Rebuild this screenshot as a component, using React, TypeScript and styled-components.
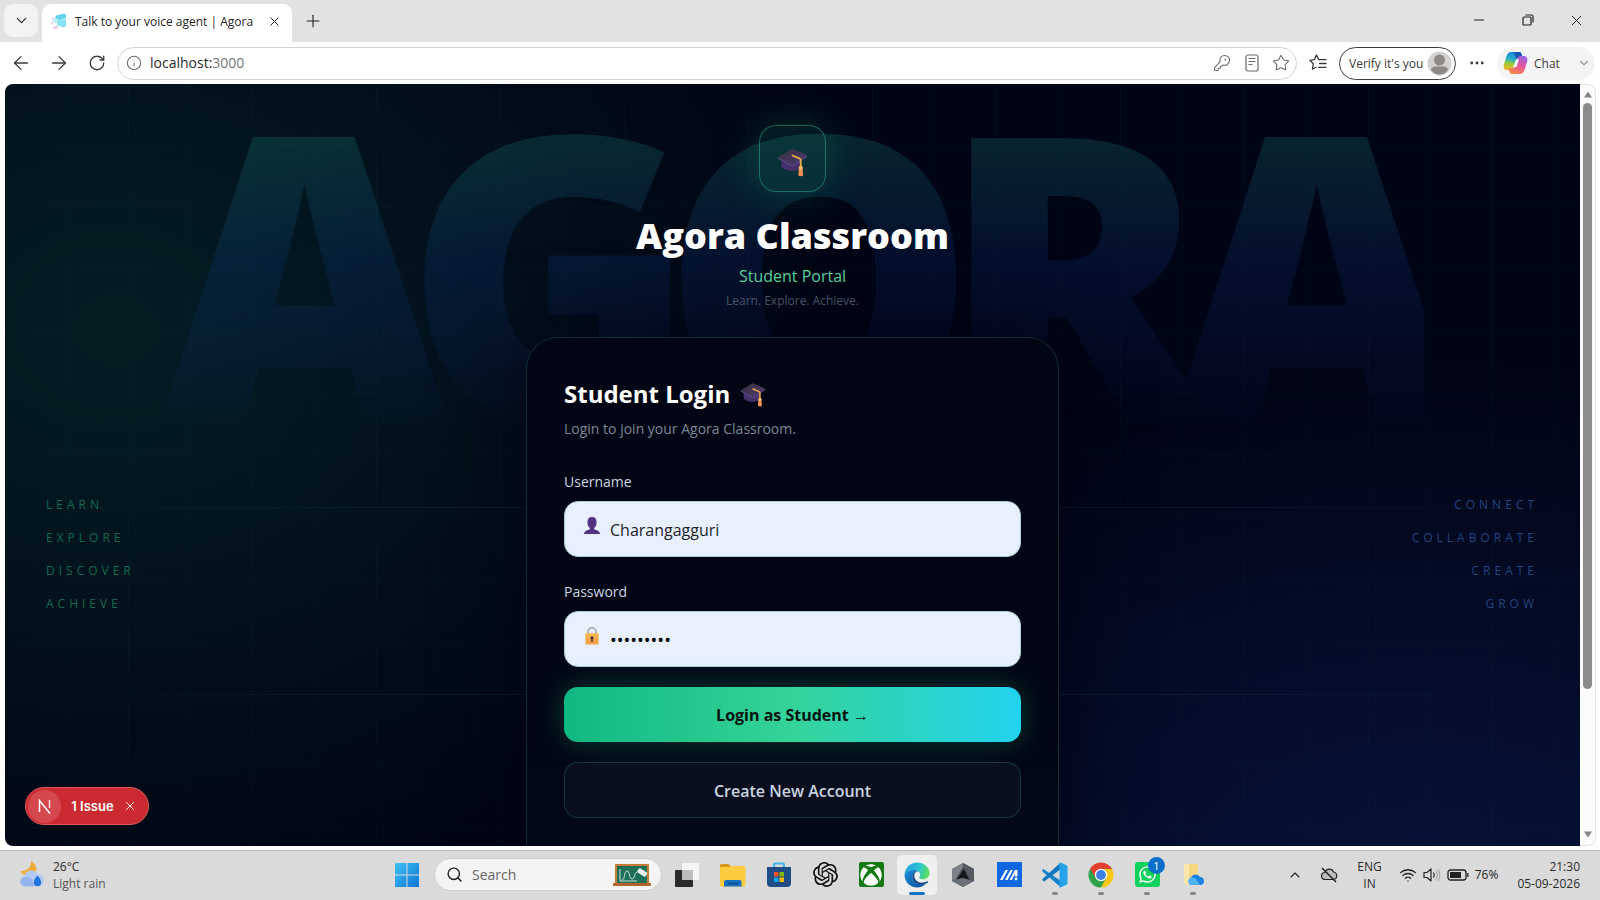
import React from "react";
import styled, { createGlobalStyle, css } from "styled-components";
import { SiOpenai } from "react-icons/si";
import { FaXbox, FaWhatsapp } from "react-icons/fa";
import {
  ArrowLeft, ArrowRight, ChevronDown, ChevronUp, Ellipsis, Info, KeyRound,
  Minus, Plus, RotateCw, Search, Star, Wifi, X,
} from "lucide-react";

const sans = `"Open Sans", "Noto Sans", sans-serif`;

const GlobalStyle = createGlobalStyle`
  *, *::before, *::after { box-sizing: border-box; }
  body { margin: 0; font-family: ${sans}; color: #1f1f1f; background: #fff; }
  button, input { font: inherit; color: inherit; }
  button { border: 0; padding: 0; background: none; cursor: pointer; }
  h1, h2, p, ul { margin: 0; padding: 0; }
  svg { display: block; flex: none; }
`;

const Desktop = styled.div`
  display: flex;
  flex-direction: column;
  height: 100vh;
  overflow: hidden;
`;

/* ---------- Browser chrome ---------- */

const TitleBar = styled.header`
  display: flex;
  align-items: flex-end;
  height: 42px;
  padding-left: 4px;
  background: #e2e2e2;
`;

const TabMenuButton = styled.button`
  display: grid;
  place-items: center;
  width: 34px;
  height: 33px;
  margin: 0 4px 5px 0;
  border-radius: 9px;
  background: #f3f3f3;
`;

const Tab = styled.div`
  display: flex;
  align-items: center;
  width: 250px;
  height: 38px;
  padding: 0 10px 3px 8px;
  border-radius: 9px 9px 0 0;
  background: #fff;
`;

const TabTitle = styled.span`
  flex: 1;
  margin-left: 7px;
  font-size: 12px;
  line-height: 16px;
  white-space: nowrap;
`;

const IconButton = styled.button<{ $w?: number }>`
  display: grid;
  place-items: center;
  flex: none;
  width: ${(p) => p.$w ?? 16}px;
  height: 24px;
`;

const NewTab = styled(IconButton)`
  height: 38px;
  margin-left: 6px;
  padding-bottom: 4px;
`;

const WindowControls = styled.div`
  display: flex;
  margin-left: auto;
  height: 42px;
  padding-bottom: 2px;
  align-items: center;
`;

const Toolbar = styled.nav`
  display: flex;
  align-items: center;
  flex: none;
  height: 42px;
  padding: 0 5px 0 2px;
  background: #fff;
  color: #3a3a3a;
`;

const AddressBar = styled.div`
  display: flex;
  align-items: center;
  flex: 1;
  height: 33px;
  margin-left: 2px;
  padding: 0 1px 0 8px;
  border: 1px solid #d2d2d2;
  border-radius: 17px;
  color: #6b6b6b;
`;

const Url = styled.span`
  flex: 1;
  margin-left: 8px;
  font-size: 14px;
  line-height: 20px;
  color: #777;
  b { font-weight: 400; color: #2a2a2a; }
`;

const VerifyButton = styled.button`
  display: flex;
  align-items: center;
  justify-content: space-between;
  width: 117px;
  height: 33px;
  padding: 0 3px 0 9px;
  border: 1px solid #3c3c3c;
  border-radius: 17px;
  font-size: 12px;
  white-space: nowrap;
`;

const ChatButton = styled.button`
  display: flex;
  align-items: center;
  gap: 6px;
  width: 98px;
  height: 33px;
  padding: 0 4px 0 6px;
  border-radius: 17px;
  background: #f4f4f4;
  font-size: 12px;
  span { flex: 1; text-align: left; }
`;

/* ---------- Web page ---------- */

const Window = styled.div`
  display: flex;
  flex: 1;
  min-height: 0;
  padding: 0 4px 4px 5px;
  background: #fff;
`;

const Page = styled.main`
  position: relative;
  display: flex;
  flex-direction: column;
  align-items: center;
  flex: 1;
  overflow: hidden;
  padding-top: 41px;
  border-radius: 8px 0 0 8px;
  background:
    radial-gradient(ellipse 46% 78% at 7% 32%, rgba(16, 185, 129, 0.14), transparent),
    radial-gradient(ellipse 50% 72% at 90% 108%, rgba(29, 78, 216, 0.2), transparent),
    #010414;
`;

const Grid = styled.div`
  position: absolute;
  inset: 0;
  background-image:
    linear-gradient(to right, transparent 61px, rgba(52, 211, 153, 0.025) 61px),
    linear-gradient(to bottom, transparent 61px, rgba(52, 211, 153, 0.025) 61px);
  background-size: 62px 62px;
`;

const Beam = styled.div<{ $top: string }>`
  position: absolute;
  left: 0;
  right: 0;
  top: ${(p) => p.$top};
  height: 1px;
  background: linear-gradient(90deg, transparent, rgba(52, 211, 153, 0.18), transparent);
`;

const Watermark = styled.div`
  position: absolute;
  top: 9px;
  left: 50%;
  transform: translateX(-50%);
  font-family: "Noto Sans", ${sans};
  font-weight: 900;
  font-size: 396px;
  line-height: 350px;
  letter-spacing: -36px;
  white-space: nowrap;
  color: transparent;
  background: linear-gradient(180deg,
    rgba(45, 180, 160, 0.19) 10%,
    rgba(25, 80, 190, 0.15) 48%,
    rgba(40, 60, 170, 0.1) 75%,
    rgba(40, 60, 170, 0.02) 96%);
  background-clip: text;
  -webkit-background-clip: text;
  user-select: none;
`;

const WordList = styled.ul<{ $side: "left" | "right" }>`
  position: absolute;
  top: 404px;
  ${(p) => (p.$side === "left"
    ? css`left: 41px; color: #14694f;`
    : css`right: 42px; text-align: right; color: #24457f;`)}
  display: flex;
  flex-direction: column;
  list-style: none;
  font-size: 12px;
  line-height: 33px;
  letter-spacing: 4px;
`;

const Logo = styled.div`
  position: relative;
  display: grid;
  place-items: center;
  flex: none;
  width: 67px;
  height: 67px;
  padding-top: 6px;
  border: 1px solid rgba(52, 211, 153, 0.4);
  border-radius: 17px;
  background: rgba(16, 185, 129, 0.12);
  box-shadow: 0 0 42px rgba(16, 185, 129, 0.26);
`;

const Title = styled.h1`
  position: relative;
  margin-top: 20px;
  font-weight: 800;
  font-size: 36px;
  line-height: 48px;
  color: #fff;
`;

const Portal = styled.p`
  position: relative;
  margin-top: 3px;
  font-size: 16px;
  line-height: 26px;
  color: #5ddba4;
`;

const Motto = styled.p`
  position: relative;
  margin-top: 3px;
  font-size: 12px;
  line-height: 18px;
  color: #526078;
`;

const Card = styled.form`
  position: relative;
  display: flex;
  flex-direction: column;
  flex: none;
  width: 533px;
  max-width: 100%;
  margin-top: 27px;
  padding: 40px 37px 60px;
  border: 1px solid rgba(52, 211, 153, 0.2);
  border-radius: 32px;
  background: linear-gradient(180deg, #020614 70%, #040918);
  box-shadow: 0 0 84px rgba(1, 2, 16, 0.7);
`;

const CardTitle = styled.h2`
  display: flex;
  align-items: center;
  gap: 10px;
  font-weight: 700;
  font-size: 24px;
  line-height: 32px;
  color: #fff;
`;

const CardText = styled.p`
  margin: 7px 0 30px;
  font-size: 14px;
  line-height: 24px;
  color: #7b8799;
`;

const FieldLabel = styled.label`
  font-size: 14px;
  line-height: 22px;
  color: #cbd5e1;
`;

const Field = styled.div`
  display: flex;
  align-items: center;
  height: 56px;
  margin: 8px 0 24px;
  padding-left: 18px;
  border: 1px solid #a8cdd6;
  border-radius: 14px;
  background: #e8f0fe;
  &:last-of-type { margin-bottom: 20px; }
  svg { margin-bottom: 6px; }
`;

const Input = styled.input`
  flex: 1;
  min-width: 0;
  height: 100%;
  margin-left: 8px;
  padding: 2px 0 0 1px;
  border: 0;
  outline: 0;
  background: none;
  font-size: 16px;
  color: #1c1f26;
  &[type="password"] { font-size: 18px; color: #000; }
`;

const ActionButton = styled.button<{ $primary?: boolean }>`
  height: ${(p) => (p.$primary ? 55 : 56)}px;
  margin-bottom: 20px;
  padding-top: 1px;
  border-radius: 14px;
  font-size: 16px;
  line-height: 24px;
  ${(p) => (p.$primary
    ? css`
        font-weight: 700;
        color: #04130f;
        background: linear-gradient(90deg, #10b981, #34d399 50%, #22d3ee);
        box-shadow: 0 0 30px rgba(16, 185, 129, 0.3);
      `
    : css`
        font-weight: 600;
        color: #cbd5e1;
        background: #0a0f20;
        border: 1px solid rgba(52, 211, 153, 0.2);
      `)}
`;

const IssuePill = styled.div`
  position: absolute;
  left: 20px;
  bottom: 21px;
  display: flex;
  align-items: center;
  width: 124px;
  height: 38px;
  padding: 0 10px 0 2px;
  border: 1px solid #d95a5f;
  border-radius: 19px;
  background: #ca2a30;
  color: #fff;
`;

const IssueBadge = styled.span`
  display: grid;
  place-items: center;
  width: 33px;
  height: 33px;
  border-radius: 50%;
  background: #d5494e;
`;

const IssueText = styled.button`
  flex: 1;
  padding-left: 2px;
  font: 600 13px/18px Inter, sans-serif;
`;

const Scrollbar = styled.div`
  display: flex;
  flex-direction: column;
  align-items: center;
  width: 16px;
  padding: 6px 0 7px;
  border: 1px solid #e6e6e6;
  border-left: 0;
  border-radius: 0 8px 8px 0;
  background: #fcfcfc;
`;

const Track = styled.div`
  flex: 1;
  width: 9px;
  margin: 5px 0;
`;

const Thumb = styled.div`
  height: 81%;
  border-radius: 5px;
  background: #8b8b8b;
`;

/* ---------- Taskbar ---------- */

const Taskbar = styled.footer`
  display: grid;
  grid-template-columns: minmax(0, 1fr) auto minmax(0, 1fr);
  align-items: center;
  flex: none;
  height: 50px;
  padding-bottom: 2px;
  border-top: 1px solid #b9b9b9;
  background: #dadada;
`;

const Weather = styled.div`
  display: flex;
  align-items: center;
  gap: 7px;
  padding-left: 20px;
`;

const SmallText = styled.div<{ $align?: string }>`
  font-size: 12px;
  line-height: 17px;
  text-align: ${(p) => p.$align ?? "left"};
  white-space: nowrap;
  color: #2b2b2b;
  div + div { color: ${(p) => (p.$align ? "#2b2b2b" : "#555")}; }
`;

const Apps = styled.div`
  display: flex;
  align-items: center;
`;

const SearchBox = styled.label`
  display: flex;
  align-items: center;
  width: 228px;
  height: 33px;
  margin: 0 2px 0 4px;
  padding: 0 10px 0 11px;
  border: 1px solid #cfcfcf;
  border-radius: 17px;
  background: #f4f4f4;
  input {
    flex: 1;
    min-width: 0;
    margin-left: 9px;
    padding: 0;
    border: 0;
    outline: 0;
    background: none;
    font-size: 14px;
  }
  input::placeholder { color: #666; opacity: 1; }
`;

const AppButton = styled.button<{ $state?: "active" | "running" }>`
  position: relative;
  display: grid;
  place-items: center;
  width: 40px;
  height: 40px;
  margin: 0 3px;
  border-radius: 5px;
  background: ${(p) => (p.$state === "active" ? "#efefef" : "none")};
  ${(p) => p.$state && css`
    &::after {
      content: "";
      position: absolute;
      left: 50%;
      bottom: 0;
      transform: translateX(-50%);
      width: ${p.$state === "active" ? 16 : 6}px;
      height: 3px;
      border-radius: 2px;
      background: ${p.$state === "active" ? "#1673c4" : "#858585"};
    }
  `}
`;

const CountBadge = styled.span`
  position: absolute;
  top: 2px;
  right: 2px;
  width: 17px;
  height: 17px;
  border-radius: 50%;
  background: #0a6fcb;
  color: #fff;
  font-size: 11px;
  line-height: 17px;
`;

const Tray = styled.div`
  display: flex;
  align-items: center;
  justify-content: flex-end;
  padding-right: 20px;
  color: #222;
`;

const TrayIcons = styled.div`
  display: flex;
  margin-right: 10px;
`;

const TrayGroup = styled.div`
  display: flex;
  align-items: center;
  gap: 6px;
  margin: 0 19px 0 17px;
  font-size: 12px;
`;

/* ---------- Drawings ---------- */

const GradCap = ({ size }: { size: number }) => (
  <svg width={size} height={size} viewBox="0 0 32 32">
    <defs>
      <linearGradient id="capTop" x1="0" y1="0" x2="1" y2="1">
        <stop offset="0" stopColor="#37323f" />
        <stop offset="1" stopColor="#4d3a6e" />
      </linearGradient>
    </defs>
    <path d="M4.500 13v8.500c3 4 14 6 19.500 2V14z" fill="#46306c" />
    <path d="M1 11.500 15 3q1-.6 2 0l14 6.500-14 10q-1 .6-2 0z" fill="url(#capTop)" />
    <path d="M1 11.500v1.300l14 8q1 .6 2 0l14-9.800V9.500l-14 10q-1 .6-2 0z" fill="#5f4a86" />
    <path d="m16 9.800 7.500 3.300q1 .5 1 1.700v7" fill="none" stroke="#f2a84a" strokeWidth="1.900" strokeLinecap="round" />
    <path d="M22.700 22h3.600l.7 8.500q-2.400 1.600-5 0z" fill="#f29155" />
    <circle cx="24.500" cy="22.500" r="2" fill="#ffc069" />
  </svg>
);

const UserGlyph = () => (
  <svg width="18" height="18" viewBox="0 0 18 18">
    <path d="M4.500 5Q4.500 0 9 0t4.500 5v1.500q0 3-2.300 4.600v1.400q5 .8 6 4.500H.8q1-3.700 6-4.500v-1.400Q4.500 9.500 4.500 6.500z" fill="#533283" />
  </svg>
);

const LockGlyph = () => (
  <svg width="18" height="18" viewBox="0 0 18 18">
    <path d="M5 8V4.800a4 4 0 0 1 8 0V8" fill="none" stroke="#b6b2bb" strokeWidth="1.900" />
    <rect x="2.500" y="6.500" width="13" height="11" rx="1.200" fill="#f8a34c" />
    <rect x="2.500" y="6.500" width="13" height="4" rx="1.200" fill="#fbb84f" />
    <path d="M9 9.200a1.600 1.600 0 0 1 .7 3V15H8.300v-2.800a1.600 1.600 0 0 1 .7-3z" fill="#45313c" />
  </svg>
);

const Favicon = () => (
  <svg width="18" height="18" viewBox="0 0 18 18">
    <path d="M6 2.500 14 .5q2 0 2 2V5l-6 2-5-1z" fill="#63d5ec" />
    <path d="M7 7.500 16 6l.5 6q-.5 2-3 2.500L7 12z" fill="#8ae3f2" />
    <path d="m3 6 5 1-2 3-4-1z" fill="#b9eef6" />
    <path d="m2 4 2 1-1 2zM0 10l3-1v3z" fill="#f3c4ee" />
    <path d="m3 14 4-2 2 2-5 3z" fill="#e9cdf3" />
  </svg>
);

const Avatar = () => (
  <svg width="25" height="25" viewBox="0 0 25 25">
    <circle cx="12.500" cy="12.500" r="12" fill="#d3d1cf" />
    <circle cx="12.500" cy="9" r="5.500" fill="#8b8886" />
    <path d="M4 19q1-3.500 4-3.500h9q3 0 4 3.500-3.500 4.500-8.500 4.500T4 19z" fill="#8b8886" />
  </svg>
);

const Copilot = () => (
  <svg width="25" height="24" viewBox="0 0 25 24">
    <defs>
      <linearGradient id="cpL" x1=".5" y1="0" x2=".3" y2="1">
        <stop offset="0" stopColor="#1784d8" />
        <stop offset=".4" stopColor="#27b1c8" />
        <stop offset=".65" stopColor="#9ccb3b" />
        <stop offset="1" stopColor="#f4b321" />
      </linearGradient>
      <linearGradient id="cpR" x1=".7" y1="0" x2=".3" y2="1">
        <stop offset="0" stopColor="#9a62e0" />
        <stop offset=".5" stopColor="#e65597" />
        <stop offset="1" stopColor="#fb8a45" />
      </linearGradient>
    </defs>
    <path d="M8 1h8q2 0 2.600 2l1 3.500h-4q-2 0-2.600 2l-2.600 8.500q-.7 2-3 2H4q-4.500-.5-3-6L3.500 5Q5 1 8 1z" fill="url(#cpL)" />
    <path d="M11 1h5q2 0 2.600 2l1 3.500h-4L13 8z" fill="#1657b8" />
    <path d="M17 23H9q-2 0-2.600-2l-1-3.500h4q2 0 2.600-2L14.600 7q.7-2 3-2H21q4.500.5 3 6l-2.500 8q-1.500 4-4.500 4z" fill="url(#cpR)" />
    <path d="M13.500 8.500h2.500L13.500 16H10z" fill="#fff" />
  </svg>
);

const Reader = () => (
  <svg width="14" height="18" viewBox="0 0 14 18" fill="none" stroke="currentColor" strokeWidth="1.200">
    <rect x="1" y="1" width="12" height="16" rx="2" />
    <path d="M3.500 4.500h7M3.500 7.500h7M3.500 10.500h4" />
  </svg>
);

const Favorites = () => (
  <svg width="18" height="18" viewBox="0 0 18 18" fill="none" stroke="currentColor" strokeWidth="1.300" strokeLinejoin="round">
    <path d="M9.800 5.600 7.400 1 5.400 5.700.8 6.300l3.500 3.500-.9 5.400 4.100-2.200" />
    <path d="M9.800 5.700H17M10.500 9.500H17M9.500 13.300H17" strokeLinecap="round" />
  </svg>
);

const Restore = () => (
  <svg width="12" height="12" viewBox="0 0 12 12" fill="none" stroke="#222" strokeWidth="1.200">
    <rect x="1" y="3" width="8" height="8" rx="1" />
    <path d="M3.500 1H9.500Q11 1 11 2.500V8.500" />
  </svg>
);

const Arrow = ({ up }: { up?: boolean }) => (
  <svg width="10" height="7" viewBox="0 0 10 7">
    <path d={up ? "M5 .5 9 6.500H1z" : "M5 6.500 1 .5h8z"} fill="#858585" />
  </svg>
);

const NextGlyph = () => (
  <svg width="16" height="16" viewBox="0 0 16 16" fill="none" stroke="#fff" strokeWidth="1.500">
    <path d="M2.500 14V2.500L13 15.500" />
    <path d="M12.500 2v8" strokeOpacity=".8" />
  </svg>
);

const WeatherIcon = () => (
  <svg width="26" height="27" viewBox="0 0 26 27">
    <path d="M11 0c5.500 3 7 9 3 13l-8 1q-4.500-.5-5.500-4C7 10.500 11.500 6 11 0z" fill="#f3ab37" />
    <path d="M5 25a5 5 0 0 1-.5-9.800A7 7 0 0 1 17.500 13 6.200 6.200 0 0 1 20 25z" fill="#b3caf3" />
    <path d="M5 25.500a4.700 4.700 0 0 1 0-9.400q5-.6 7 3l2 6.400z" fill="#92b5ef" />
    <path d="M17.500 14.500c2 2.500 3.700 4.500 3.700 7a3.700 3.700 0 0 1-7.400 0c0-2.500 1.700-4.500 3.700-7z" fill="#1f74e0" />
  </svg>
);

const WindowsLogo = () => (
  <svg width="24" height="24" viewBox="0 0 24 24">
    <defs>
      <linearGradient id="win" x1="0" y1="0" x2="1" y2="1">
        <stop offset="0" stopColor="#42c3f8" />
        <stop offset="1" stopColor="#0a73d3" />
      </linearGradient>
    </defs>
    <path d="M0 0h11.500v11.500H0zM12.500 0H24v11.500H12.500zM0 12.500h11.500V24H0zM12.500 12.500H24V24H12.500z" fill="url(#win)" />
  </svg>
);

const Chalkboard = () => (
  <svg width="38" height="24" viewBox="0 0 38 24">
    <rect x="2" y="1" width="34" height="20" rx="1" fill="#c77c35" />
    <rect x="4" y="3" width="30" height="17" fill="#1d6f59" />
    <path d="M7 6v12h17M9 17c3 0 2-9 5-9s2 8 5 8 2-6 5-7" fill="none" stroke="#cfe6dc" strokeWidth="1" />
    <rect x="24" y="7" width="10" height="5" rx="1.500" fill="#e9eff0" transform="rotate(32 29 10)" />
    <rect x="0" y="20" width="38" height="3" rx="1" fill="#b0632a" />
  </svg>
);

const TaskView = () => (
  <svg width="26" height="24" viewBox="0 0 26 24">
    <rect x="1" y="7" width="18" height="17" rx="1" fill="#2a2a2a" />
    <rect x="8" y="0" width="17" height="17" rx="1" fill="#f5f5f5" />
    <path d="M8 7h11v10H8z" fill="#bdbdbd" />
  </svg>
);

const Folder = () => (
  <svg width="26" height="24" viewBox="0 0 26 24">
    <path d="M0 2.500Q0 1 1.500 1H8q1 0 1.500.8L11 4h-1L0 8z" fill="#d99a1c" />
    <path d="M0 5q0-1 1-1h8.500l2-1H24q1.500 0 1.500 1.500V22q0 1.500-1.500 1.500H1.500Q0 23.500 0 22z" fill="#fccb3f" />
    <path d="M4 23.500V19q0-2 2-2h13.500q2 0 2 2v4.500z" fill="#1570bf" />
    <path d="M8 20.500h10" stroke="#0c4f92" strokeWidth="2" />
  </svg>
);

const Store = () => (
  <svg width="26" height="26" viewBox="0 0 26 26">
    <path d="M8 6V2.500Q8 1.500 9 1.500h8q1 0 1 1V6" fill="none" stroke="#3cb6ec" strokeWidth="2" />
    <path d="M1 5h24v16q0 4-4 4H5q-4 0-4-4z" fill="#1f4d86" />
    <path d="M8 10h4.500v4.500H8z" fill="#f25022" />
    <path d="M13.500 10H18v4.500h-4.500z" fill="#7fba00" />
    <path d="M8 15.500h4.500V20H8z" fill="#00a4ef" />
    <path d="M13.500 15.500H18V20h-4.500z" fill="#ffb900" />
  </svg>
);

const XboxTile = styled.span`
  display: grid;
  place-items: center;
  width: 25px;
  height: 25px;
  border-radius: 2px;
  background: #137a13;
  color: #fff;
`;

const Edge = () => (
  <svg width="26" height="26" viewBox="0 0 26 26">
    <defs>
      <linearGradient id="edgeTop" x1="0" y1=".3" x2="1" y2=".5">
        <stop offset="0" stopColor="#1f9fe0" />
        <stop offset=".55" stopColor="#2bc3d2" />
        <stop offset="1" stopColor="#5fe05a" />
      </linearGradient>
      <linearGradient id="edgeLow" x1="0" y1="0" x2="1" y2="1">
        <stop offset="0" stopColor="#1a8fdc" />
        <stop offset="1" stopColor="#0c4a94" />
      </linearGradient>
    </defs>
    <path d="M.5 12.500C1 5.500 6.500.5 13 .5c7 0 12.500 5 12.500 10.500 0 4-3 6.300-6.500 6.300-2.300 0-3.800-.8-3.800-1.800 0-.7.900-1.100.9-2.700C16.100 9.800 13 8 9.500 8 5.500 8 2 9.700.5 12.500z" fill="url(#edgeTop)" />
    <path d="M.5 12.500C2 9.700 5.500 8 9.500 8c2 0 3.600.5 4.700 1.300C9.500 9.500 8 13 8.500 16c.8 4.500 6 7.800 13.500 5.500C19.500 24.300 16.500 25.500 13 25.500 6 25.500.5 20 .5 12.500z" fill="url(#edgeLow)" />
    <path d="M14.200 9.300C10 10 9.500 14 11 17c2 3.700 7.500 4.800 12.500 2.300.7-.3 1 .2.6.7-.6.8-1.300 1.200-2.100 1.500C14.500 23.800 9.300 20.500 8.500 16c-.5-3 1-6.500 5.700-6.700z" fill="#0b417f" />
  </svg>
);

const Cube = () => (
  <svg width="24" height="26" viewBox="0 0 24 26">
    <path d="M12 1 23 7v12l-11 6-11-6V7z" fill="#4a4f56" />
    <path d="M12 1 1 7v12l4-2 7-12z" fill="#7d8289" />
    <path d="M12 1 23 7v12l-4-2-7-12z" fill="#565b62" />
    <path d="M13 7 18.500 18 12 16l-6.500 1.500z" fill="#15171a" />
    <path d="m1 19 4.500-1.500L12 16l6.500 2L23 19l-11 6z" fill="#6c7178" />
  </svg>
);

const MyAsus = () => (
  <svg width="25" height="25" viewBox="0 0 25 25">
    <path d="M0 0h25v25H0z" fill="#0f68e2" />
    <path d="M3 18 8.500 8H11L5.500 18zM8 18l5.500-10H16l-5.500 10z" fill="#fff" />
    <path d="M12.500 18 18 8h2.500v6.500H18V12l-3.300 6z" fill="#fff" />
    <circle cx="19" cy="17" r="1.400" fill="#fff" />
  </svg>
);

const VsCode = () => (
  <svg width="26" height="26" viewBox="0 0 26 26">
    <path d="M1.700 7.200q-.6-.3-1.100.2L.3 8.400q-.3.600.2 1.200L19 25.500V19z" fill="#1384cc" />
    <path d="M18.500.8v6.500L2.500 19.200q-.6.300-1.100-.1L.5 18q-.4-.7.200-1.300z" fill="#0f76c0" />
    <path d="m18.500.5 6 2.700q1 .5 1 1.700v16.200q0 1.200-1 1.700l-6 2.700q-1 .3-1-.8V1.300q0-1 1-.8z" fill="#26a3ea" />
  </svg>
);

const Chrome = () => (
  <svg width="26" height="26" viewBox="0 0 26 26">
    <path d="M13 13 2.200 6.700a12.500 12.500 0 0 1 21.600 0z" fill="#e2412f" />
    <path d="M13 13 2.200 6.700A12.500 12.500 0 0 0 13 25.500z" fill="#2fa04b" />
    <path d="M13 13V25.500A12.500 12.500 0 0 0 23.800 6.700H13z" fill="#fbc817" />
    <path d="m2.200 6.700 5.500 9.500L13 7h10.800A12.500 12.500 0 0 0 2.200 6.700z" fill="#e2412f" />
    <path d="m18.200 16-5.400 9.500h.2l-5.300-9.300z" fill="#2fa04b" />
    <circle cx="13" cy="13" r="6.200" fill="#fff" />
    <circle cx="13" cy="13" r="4.900" fill="#3f7fe8" />
  </svg>
);

const WhatsTile = styled(XboxTile)`
  background: #0fd15c;
  border-radius: 3px;
`;

const CloudFolder = () => (
  <svg width="22" height="24" viewBox="0 0 22 24">
    <path d="M2 1h14v19H4q-2 0-2-2z" fill="#f6d783" />
    <path d="M2 1h5v22l-5-3z" fill="#fbe7ae" />
    <path d="M9 22a4 4 0 0 1 0-7.500 5 5 0 0 1 9-.5 4 4 0 0 1 0 8z" fill="#1c83e4" />
    <path d="M9 22a4 4 0 0 1 0-7.500q4-.5 6 3l3 4.500z" fill="#4fb2f5" />
  </svg>
);

const CloudOff = () => (
  <svg width="18" height="16" viewBox="0 0 18 16" fill="none" stroke="currentColor" strokeWidth="1.200">
    <path d="M5 12.500a3.500 3.500 0 0 1 0-7 4.500 4.500 0 0 1 8.500-.5 3.800 3.800 0 0 1 0 7.500z" fill="#bcbcbc" />
    <path d="m2 1 14 14" strokeWidth="1.500" />
  </svg>
);

const Speaker = () => (
  <svg width="18" height="16" viewBox="0 0 18 16" fill="none" stroke="currentColor" strokeWidth="1.200" strokeLinejoin="round">
    <path d="M1 5.500h3l4-3.500v12l-4-3.500H1z" />
    <path d="M10.500 5.500q1.500 2.500 0 5" />
    <path d="M12.800 3.500q3 4.500 0 9M15 2q3.500 6 0 12" stroke="#a9a9a9" />
  </svg>
);

const Battery = () => (
  <svg width="22" height="12" viewBox="0 0 22 12" fill="none" stroke="currentColor" strokeWidth="1.300">
    <rect x="1" y="1" width="18" height="10" rx="2.500" />
    <rect x="3" y="3" width="11" height="6" fill="currentColor" stroke="none" />
    <path d="M20.800 4v4" />
  </svg>
);

/* ---------- Screen ---------- */

const LEFT_WORDS = ["LEARN", "EXPLORE", "DISCOVER", "ACHIEVE"];
const RIGHT_WORDS = ["CONNECT", "COLLABORATE", "CREATE", "GROW"];

type TaskApp = { name: string; icon: React.ReactNode; state?: "active" | "running"; count?: number };

const APPS: TaskApp[] = [
  { name: "Task view", icon: <TaskView /> },
  { name: "File Explorer", icon: <Folder /> },
  { name: "Microsoft Store", icon: <Store /> },
  { name: "ChatGPT", icon: <SiOpenai size={25} color="#111" /> },
  { name: "Xbox", icon: <XboxTile><FaXbox size={22} /></XboxTile> },
  { name: "Microsoft Edge", icon: <Edge />, state: "active" },
  { name: "Armoury", icon: <Cube /> },
  { name: "MyASUS", icon: <MyAsus /> },
  { name: "Visual Studio Code", icon: <VsCode />, state: "running" },
  { name: "Google Chrome", icon: <Chrome />, state: "running" },
  { name: "WhatsApp", icon: <WhatsTile><FaWhatsapp size={19} /></WhatsTile>, state: "running", count: 1 },
  { name: "OneDrive folder", icon: <CloudFolder />, state: "running" },
];

export default function App() {
  return (
    <Desktop>
      <GlobalStyle />
      <TitleBar>
        <TabMenuButton aria-label="Tab actions"><ChevronDown size={17} strokeWidth={1.5} /></TabMenuButton>
        <Tab>
          <Favicon />
          <TabTitle>Talk to your voice agent | Agora</TabTitle>
          <IconButton aria-label="Close tab"><X size={15} strokeWidth={1.5} /></IconButton>
        </Tab>
        <NewTab $w={30} aria-label="New tab"><Plus size={20} strokeWidth={1.3} /></NewTab>
        <WindowControls>
          <IconButton $w={48} aria-label="Minimize"><Minus size={16} strokeWidth={1.5} /></IconButton>
          <IconButton $w={49} aria-label="Restore"><Restore /></IconButton>
          <IconButton $w={48} aria-label="Close"><X size={17} strokeWidth={1.4} /></IconButton>
        </WindowControls>
      </TitleBar>

      <Toolbar>
        <IconButton $w={38} aria-label="Back"><ArrowLeft size={22} strokeWidth={1.4} /></IconButton>
        <IconButton $w={38} aria-label="Forward"><ArrowRight size={22} strokeWidth={1.4} /></IconButton>
        <IconButton $w={37} aria-label="Refresh"><RotateCw size={18} strokeWidth={1.7} /></IconButton>
        <AddressBar>
          <Info size={16} strokeWidth={1.6} />
          <Url><b>localhost:</b>3000</Url>
          <IconButton $w={30} aria-label="Passwords"><KeyRound size={18} strokeWidth={1.4} /></IconButton>
          <IconButton $w={29} aria-label="Reading view"><Reader /></IconButton>
          <IconButton $w={29} aria-label="Add to favorites"><Star size={18} strokeWidth={1.4} /></IconButton>
        </AddressBar>
        <IconButton $w={42} aria-label="Favorites"><Favorites /></IconButton>
        <VerifyButton>Verify it's you<Avatar /></VerifyButton>
        <IconButton $w={41} aria-label="Settings and more"><Ellipsis size={18} strokeWidth={1.8} /></IconButton>
        <ChatButton><Copilot /><span>Chat</span><ChevronDown size={14} strokeWidth={1.5} /></ChatButton>
      </Toolbar>

      <Window>
        <Page>
          <Grid />
          <Beam $top="423px" />
          <Beam $top="610px" />
          <Watermark aria-hidden>AGORA</Watermark>
          <WordList $side="left">{LEFT_WORDS.map((w) => <li key={w}>{w}</li>)}</WordList>
          <WordList $side="right">{RIGHT_WORDS.map((w) => <li key={w}>{w}</li>)}</WordList>

          <Logo><GradCap size={31} /></Logo>
          <Title>Agora Classroom</Title>
          <Portal>Student Portal</Portal>
          <Motto>Learn. Explore. Achieve.</Motto>

          <Card onSubmit={(e) => e.preventDefault()}>
            <CardTitle>Student Login <GradCap size={26} /></CardTitle>
            <CardText>Login to join your Agora Classroom.</CardText>
            <FieldLabel htmlFor="username">Username</FieldLabel>
            <Field>
              <UserGlyph />
              <Input id="username" type="text" defaultValue="Charangagguri" />
            </Field>
            <FieldLabel htmlFor="password">Password</FieldLabel>
            <Field>
              <LockGlyph />
              <Input id="password" type="password" defaultValue="classroom" />
            </Field>
            <ActionButton $primary type="submit">Login as Student →</ActionButton>
            <ActionButton type="button">Create New Account</ActionButton>
          </Card>

          <IssuePill>
            <IssueBadge><NextGlyph /></IssueBadge>
            <IssueText>1 Issue</IssueText>
            <IconButton aria-label="Dismiss"><X size={14} strokeWidth={1.6} /></IconButton>
          </IssuePill>
        </Page>
        <Scrollbar>
          <Arrow up />
          <Track><Thumb /></Track>
          <Arrow />
        </Scrollbar>
      </Window>

      <Taskbar>
        <Weather>
          <WeatherIcon />
          <SmallText><div>26°C</div><div>Light rain</div></SmallText>
        </Weather>
        <Apps>
          <AppButton aria-label="Start"><WindowsLogo /></AppButton>
          <SearchBox>
            <Search size={17} strokeWidth={2} />
            <input type="text" placeholder="Search" aria-label="Search" />
            <Chalkboard />
          </SearchBox>
          {APPS.map((a) => (
            <AppButton key={a.name} aria-label={a.name} $state={a.state}>
              {a.icon}
              {a.count && <CountBadge>{a.count}</CountBadge>}
            </AppButton>
          ))}
        </Apps>
        <Tray>
          <TrayIcons>
            <IconButton $w={32} aria-label="Show hidden icons"><ChevronUp size={16} strokeWidth={1.7} /></IconButton>
            <IconButton $w={36} aria-label="OneDrive"><CloudOff /></IconButton>
          </TrayIcons>
          <SmallText $align="center"><div>ENG</div><div>IN</div></SmallText>
          <TrayGroup><Wifi size={18} strokeWidth={1.7} /><Speaker /><Battery />76%</TrayGroup>
          <SmallText $align="right"><div>21:30</div><div>05-09-2026</div></SmallText>
        </Tray>
      </Taskbar>
    </Desktop>
  );
}
